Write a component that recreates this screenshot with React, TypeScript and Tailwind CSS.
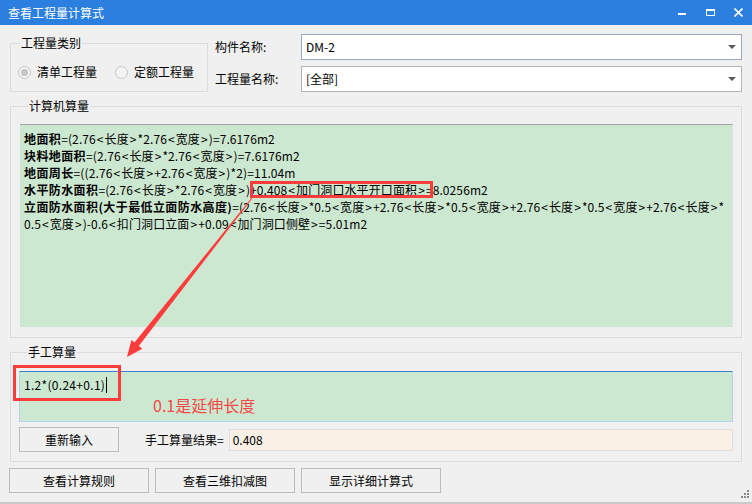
import React from "react";

const FONT = { fontFamily: '"Noto Sans CJK SC", "Noto Sans", sans-serif' };

function T({ s }: { s: string }) {
  const parts = s.split(/([<>])/);
  return (
    <>
      {parts.map((p, i) =>
        p === "<" || p === ">" ? (
          <span key={i} className="mx-[1px]">
            {p}
          </span>
        ) : (
          <React.Fragment key={i}>{p}</React.Fragment>
        )
      )}
    </>
  );
}

function Combo({ value, blue }: { value: string; blue?: boolean }) {
  return (
    <div
      className={`flex-1 h-[26px] bg-white border flex items-center pl-[4px] pr-[5px] ${
        blue ? "border-[#9aa7c0]" : "border-[#b4b4b4]"
      }`}
    >
      <span className="flex-1 text-[12px] leading-[16px] text-black">{value}</span>
      <span className="w-0 h-0 border-l-[4px] border-r-[4px] border-t-[4px] border-l-transparent border-r-transparent border-t-[#5a5a5a]" />
    </div>
  );
}

function Radio({ checked, label }: { checked?: boolean; label: string }) {
  return (
    <div className="flex items-center gap-[6px]">
      <span className="w-[13px] h-[13px] rounded-full border border-[#c6c6c6] bg-[#f3f3f3] flex items-center justify-center">
        {checked && <span className="w-[7px] h-[7px] rounded-full bg-[#c6c6c6]" />}
      </span>
      <span className="text-[12px] leading-[16px] text-black">{label}</span>
    </div>
  );
}

function Btn({ label, w }: { label: string; w: string }) {
  return (
    <button
      className={`${w} h-[25px] border border-[#bcbcbc] bg-[#f0f0f0] text-[12px] leading-[16px] text-black flex items-center justify-center`}
    >
      {label}
    </button>
  );
}

export default function App() {
  return (
    <div
      className="relative w-[752px] h-[504px] bg-[#f0f0f0] overflow-hidden flex flex-col border-b-2 border-[#cacaca] box-border text-black"
      style={FONT}
    >
      {/* Title bar */}
      <div className="h-[25px] shrink-0 bg-[#2b7fdf] flex items-center pl-[8px] pr-[9px]">
        <span className="flex-1 text-white text-[12px] leading-[16px]">查看工程量计算式</span>
        <div className="flex items-center">
          <span className="w-[8px] h-[2px] bg-white mt-[3px]" />
          <span className="ml-[20px] w-[9px] h-[7px] border border-white border-t-2 box-border" />
          <svg className="ml-[19px]" width="9" height="9" viewBox="0 0 9 9">
            <path d="M0.5 0.5 L8.5 8.5 M8.5 0.5 L0.5 8.5" stroke="white" strokeWidth="1.6" />
          </svg>
        </div>
      </div>

      {/* Top row */}
      <div className="flex items-start px-[10px] pt-[9px]">
        <fieldset className="w-[198px] h-[57px] mt-[1px] border border-[#dcdcdc] box-border m-0 px-[7px] pb-0 shrink-0">
          <legend className="ml-[2px] px-[1px] text-[12px] leading-[16px]">工程量类别</legend>
          <div className="flex items-center gap-[18px] pt-[13px]">
            <Radio checked label="清单工程量" />
            <Radio label="定额工程量" />
          </div>
        </fieldset>
        <div className="flex-1 flex flex-col gap-[6px] pl-[7px]">
          <div className="flex items-center">
            <span className="w-[86px] text-[12px] leading-[16px]">构件名称:</span>
            <Combo value="DM-2" blue />
          </div>
          <div className="flex items-center">
            <span className="w-[86px] text-[12px] leading-[16px]">工程量名称:</span>
            <Combo value="[全部]" />
          </div>
        </div>
      </div>

      {/* 计算机算量 */}
      <div className="px-[10px] pt-[6px]">
        <fieldset className="h-[240px] border border-[#dcdcdc] box-border m-0 pl-[9px] pr-[8px] pb-0">
          <legend className="ml-[8px] px-[1px] text-[12px] leading-[16px]">计算机算量</legend>
          <div className="mt-[10px] h-[203px] bg-[#cde8d0] border-t border-t-[#a5a5a5] border-r border-r-[#e2e2e2] pl-[4px] pt-[5px] text-[12px] leading-[17px] tracking-[0.1px] whitespace-nowrap">
            <div>
              <b className="tracking-[0.4px]">地面积</b>
              <T s="=(2.76<长度>*2.76<宽度>)=7.6176m2" />
            </div>
            <div>
              <b className="tracking-[0.4px]">块料地面积</b>
              <T s="=(2.76<长度>*2.76<宽度>)=7.6176m2" />
            </div>
            <div>
              <b className="tracking-[0.4px]">地面周长</b>
              <T s="=((2.76<长度>+2.76<宽度>)*2)=11.04m" />
            </div>
            <div>
              <b className="tracking-[0.4px]">水平防水面积</b>
              <T s="=(2.76<长度>*2.76<宽度>)" />
              <span className="outline-3 outline-[#ff3c3c] -outline-offset-3">
                <T s="+0.408<加门洞口水平开口面积>=" />
              </span>
              8.0256m2
            </div>
            <div>
              <b className="tracking-[0.4px]">立面防水面积(大于最低立面防水高度)</b>
              <T s="=(2.76<长度>*0.5<宽度>+2.76<长度>*0.5<宽度>+2.76<长度>*0.5<宽度>+2.76<长度>*" />
            </div>
            <div>
              <T s="0.5<宽度>)-0.6<扣门洞口立面>+0.09<加门洞口侧壁>=5.01m2" />
            </div>
          </div>
        </fieldset>
      </div>

      {/* 手工算量 */}
      <div className="px-[10px] pt-[6px]">
        <fieldset className="h-[118px] border border-[#dcdcdc] box-border m-0 pl-[8px] pr-[8px] pb-0">
          <legend className="ml-[8px] px-[1px] text-[12px] leading-[16px]">手工算量</legend>
          <div className="mt-[11px] h-[51px] bg-[#cde8d0] border border-[#b3d3ee] border-t-[#3d7fc6] pl-[4px] pt-[4px] text-[12px] leading-[17px] tracking-[0.3px] flex items-start">
            <span>1.2*(0.24+0.1)</span>
            <span className="inline-block w-px h-[16px] bg-black ml-[1px] mt-[1px]" />
          </div>
          <div className="mt-[5px] flex items-center">
            <Btn label="重新输入" w="w-[100px]" />
            <span className="ml-[26px] text-[12px] leading-[16px]">手工算量结果=</span>
            <div className="ml-[5px] flex-1 h-[22px] bg-[#faf0e6] border border-[#dedede] flex items-center pl-[3px] text-[12px] leading-[16px]">
              0.408
            </div>
          </div>
        </fieldset>
      </div>

      {/* Bottom buttons */}
      <div className="flex gap-[6px] px-[9px] pt-[6px]">
        <Btn label="查看计算规则" w="w-[140px]" />
        <Btn label="查看三维扣减图" w="w-[140px]" />
        <Btn label="显示详细计算式" w="w-[140px]" />
      </div>

      {/* Annotations overlay */}
      <div className="absolute left-[13px] top-[365px] w-[108px] h-[36px] border-[3px] border-[#ff3c3c]" />
      <span className="absolute left-[153px] top-[395px] text-[16px] leading-[20px] text-[#f24848]">0.1是延伸长度</span>
      <svg className="absolute left-0 top-0 pointer-events-none" width="752" height="504" viewBox="0 0 752 504">
        <polygon points="252.4,198.3 251.6,197.7 133.8,343.2 138.2,346.8" fill="#ff3c3c" />
        <polygon points="127,357 131.4,340.1 142.4,348.7" fill="#ff3c3c" />
      </svg>

      {/* Resize grip */}
      <svg className="absolute right-[3px] bottom-[4px]" width="8" height="8" viewBox="0 0 8 8">
        <rect x="6" y="0" width="2" height="2" fill="#8a8a8a" />
        <rect x="3" y="3" width="2" height="2" fill="#8a8a8a" />
        <rect x="6" y="3" width="2" height="2" fill="#8a8a8a" />
        <rect x="0" y="6" width="2" height="2" fill="#8a8a8a" />
        <rect x="3" y="6" width="2" height="2" fill="#8a8a8a" />
        <rect x="6" y="6" width="2" height="2" fill="#8a8a8a" />
      </svg>
    </div>
  );
}
